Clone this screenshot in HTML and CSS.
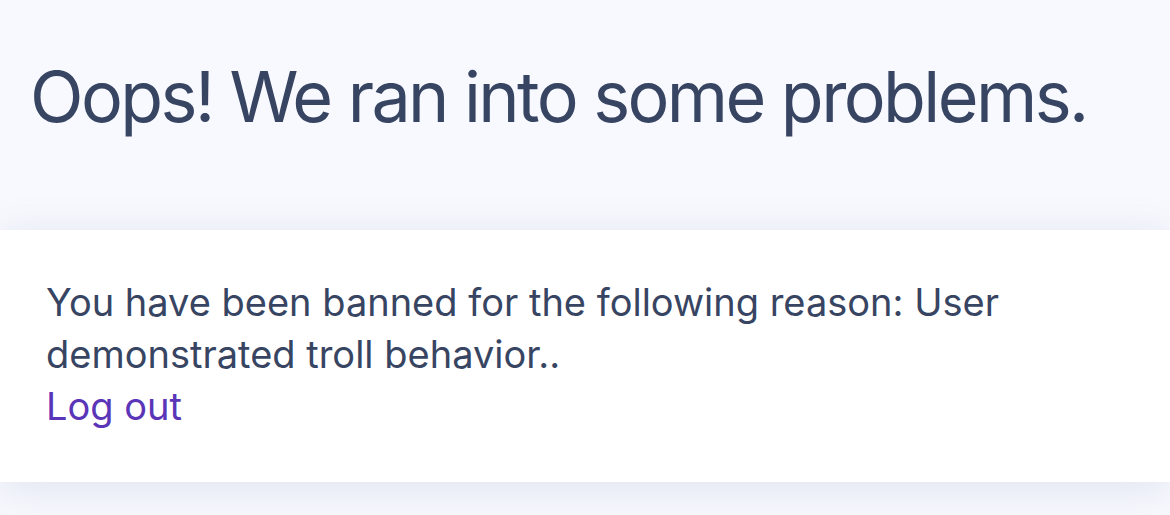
FILE: index.html
```html
<!DOCTYPE html>
<html lang="en">
<head>
<meta charset="utf-8">
<title>Banned</title>
<link rel="stylesheet" href="styles.css">
</head>
<body>
<main class="page">
  <header class="page-header">
    <h1 class="title">Oops! We ran into some problems.</h1>
  </header>
  <section class="card">
    <p class="message">You have been banned for the following reason: User demonstrated troll behavior..</p>
    <a class="logout" href="#">Log out</a>
  </section>
</main>
</body>
</html>
```

FILE: styles.css
```css
html, body {
  margin: 0;
  padding: 0;
  background: #f8f9fe;
}
body {
  font-family: Inter, "Noto Sans", "Liberation Sans", sans-serif;
  color: #374563;
  height: 515px;
  overflow: hidden;
}
.page {
  display: flex;
  flex-direction: column;
}
.page-header {
  height: 230px;
  padding: 0 30px;
  box-sizing: border-box;
}
.title {
  margin: 0;
  padding-top: 53px;
  font-size: 70px;
  font-weight: 400;
  line-height: 88px;
  letter-spacing: -2.6px;
  white-space: nowrap;
}
.card {
  background: #ffffff;
  height: 252px;
  box-sizing: border-box;
  padding: 46px 46px 0;
  box-shadow: 0 6px 40px rgba(70, 90, 150, 0.14);
  display: flex;
  flex-direction: column;
  align-items: flex-start;
}
.message {
  margin: 0;
  font-size: 38px;
  line-height: 52px;
  max-width: 1010px;
}
.logout {
  font-size: 38px;
  line-height: 52px;
  color: #5a35b8;
  text-decoration: none;
}
```
